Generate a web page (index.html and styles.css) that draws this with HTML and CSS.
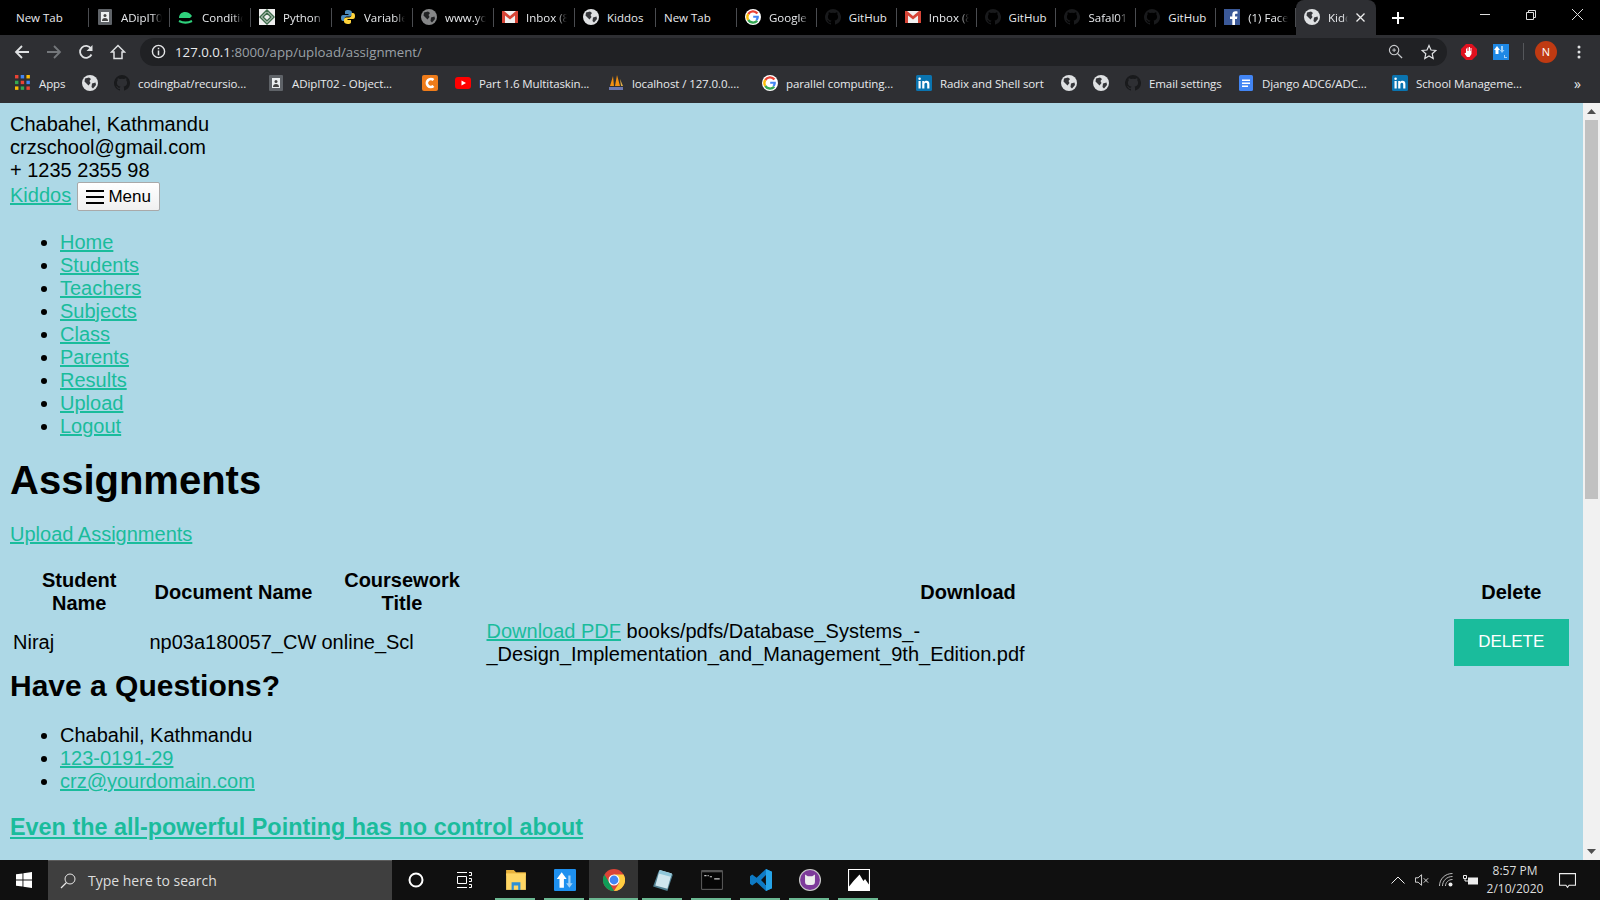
FILE: index.html
```html
<!DOCTYPE html>
<html lang="en">
<head>
<meta charset="utf-8">
<title>Kiddos</title>
<link rel="stylesheet" href="styles.css">
</head>
<body>
<svg class="sprite" aria-hidden="true">
  <symbol id="globe" viewBox="0 0 16 16"><circle cx="8" cy="8" r="8" fill="#dfe1e3"/><path fill="#35363a" d="M3 3.500 7 2.500 9 4 7.500 6 8.500 8 6.500 10.500 5 9 2.500 6.500ZM10 8.500 13.500 7.500 14 10 11 13.500 9.500 12Z"/></symbol>
  <symbol id="gh" viewBox="0 0 16 16"><path fill="#191a1c" d="M8 0a8 8 0 0 0-2.500 15.600c.4.100.5-.2.500-.4v-1.400c-2.200.5-2.700-1-2.700-1-.4-.9-.9-1.200-.9-1.200-.7-.5.100-.5.100-.5.800.100 1.200.8 1.200.8.700 1.200 1.900.9 2.300.7.100-.5.300-.9.500-1.100-1.800-.2-3.600-.9-3.600-4 0-.9.300-1.600.8-2.100-.1-.2-.4-1 .1-2.100 0 0 .7-.2 2.200.8a7.600 7.600 0 0 1 4 0c1.500-1 2.200-.8 2.200-.8.400 1.100.2 1.900.1 2.100.5.600.8 1.300.8 2.100 0 3.100-1.900 3.800-3.600 4 .3.200.5.700.5 1.500v2.200c0 .2.100.5.500.4A8 8 0 0 0 8 0Z"/></symbol>
  <symbol id="gmail" viewBox="0 0 16 16"><path fill="#f1f1f1" d="M0 2h16v12H0z"/><path fill="#d64537" d="M0 2h2l6 5 6-5h2v12h-3V6.500L8 10.500 3 6.500V14H0Z"/></symbol>
  <symbol id="google" viewBox="0 0 16 16"><circle cx="8" cy="8" r="8" fill="#fff"/><path fill="none" stroke="#ea4335" stroke-width="2.400" d="M12.400 4.400A5.600 5.600 0 0 0 3.300 5"/><path fill="none" stroke="#fbbc05" stroke-width="2.400" d="M3.300 5a5.600 5.600 0 0 0 0 6"/><path fill="none" stroke="#34a853" stroke-width="2.400" d="M3.300 11a5.600 5.600 0 0 0 8.900.7"/><path fill="#4285f4" d="M8.200 6.800h5.600c.3 2-.3 3.700-1.600 4.900l-1.700-1.400c.6-.5.900-1 1-1.600H8.200Z"/></symbol>
  <symbol id="doc" viewBox="0 0 16 16"><rect width="14" height="16" x="1" rx="1" fill="#5f6368"/><rect width="8" height="10" x="4" y="3" fill="#eceff1"/><circle cx="8" cy="6.500" r="1.500" fill="#444"/><path fill="#444" d="M5 12c0-2 1-3 3-3s3 1 3 3Z"/></symbol>
  <symbol id="li" viewBox="0 0 16 16"><rect width="16" height="16" rx="1.500" fill="#0a74b0"/><path fill="#fff" d="M2.500 6h2.200v7.500H2.500ZM3.600 2.500a1.300 1.300 0 1 1 0 2.600 1.300 1.300 0 0 1 0-2.600ZM6.200 6h2.100v1c.4-.7 1.200-1.200 2.300-1.200 2.200 0 2.800 1.400 2.800 3.400v4.300h-2.200V9.700c0-1-.2-1.900-1.300-1.900s-1.500.8-1.500 1.900v3.800H6.200Z"/></symbol>
</svg>

<header class="chrome">
  <div class="tabstrip">
    <div class="tab"><span class="tab-text tab-full">New Tab</span></div>
    <div class="tab"><svg class="ico"><use href="#doc"/></svg><span class="tab-text">ADipIT02</span></div>
    <div class="tab"><svg class="ico" viewBox="0 0 16 16"><path fill="#2fd17c" d="M1 9c0-4 3-6 6-6s5 1.500 7 4l-2 2Z"/><path fill="none" stroke="#2fd17c" stroke-width="2" d="M1 12c4 2 9 2 13 0"/></svg><span class="tab-text">Conditional</span></div>
    <div class="tab"><svg class="ico" viewBox="0 0 16 16"><rect width="16" height="16" fill="#eee"/><path fill="none" stroke="#3d6b4a" stroke-width="1.500" d="M8 1 15 8 8 15 1 8Z M8 4 12 8 8 12 4 8Z"/></svg><span class="tab-text">Python</span></div>
    <div class="tab"><svg class="ico" viewBox="0 0 16 16"><path fill="#4b8bbe" d="M8 1C5 1 5 2 5 3.500V5h3.500v1H3C1.500 6 1 7 1 9s.7 3 2 3h1.500v-2c0-1.500 1-2.500 2.500-2.500h3c1 0 2-1 2-2V3.500C12 2 10.500 1 8 1Z"/><path fill="#ffd43b" d="M8 15c3 0 3-1 3-2.500V11H7.500v-1H13c1.500 0 2-1 2-3s-.7-3-2-3h-1.500v2c0 1.500-1 2.500-2.500 2.500H6c-1 0-2 1-2 2v2C4 14 5.500 15 8 15Z"/></svg><span class="tab-text">Variables</span></div>
    <div class="tab"><svg class="ico ico-dim"><use href="#globe"/></svg><span class="tab-text">www.youtube</span></div>
    <div class="tab"><svg class="ico"><use href="#gmail"/></svg><span class="tab-text">Inbox (8)</span></div>
    <div class="tab"><svg class="ico"><use href="#globe"/></svg><span class="tab-text tab-plain">Kiddos</span></div>
    <div class="tab"><span class="tab-text tab-full">New Tab</span></div>
    <div class="tab"><svg class="ico"><use href="#google"/></svg><span class="tab-text">Google</span></div>
    <div class="tab"><svg class="ico"><use href="#gh"/></svg><span class="tab-text tab-plain">GitHub</span></div>
    <div class="tab"><svg class="ico"><use href="#gmail"/></svg><span class="tab-text">Inbox (8)</span></div>
    <div class="tab"><svg class="ico"><use href="#gh"/></svg><span class="tab-text tab-plain">GitHub</span></div>
    <div class="tab"><svg class="ico"><use href="#gh"/></svg><span class="tab-text">Safal01</span></div>
    <div class="tab"><svg class="ico"><use href="#gh"/></svg><span class="tab-text tab-plain">GitHub</span></div>
    <div class="tab"><svg class="ico" viewBox="0 0 16 16"><rect width="16" height="16" fill="#3b5998"/><path fill="#fff" d="M11 16V10h2l.4-2.500H11V6c0-.8.300-1.200 1.200-1.200h1.300V2.500C13 2.400 12.200 2.300 11.500 2.300 9.500 2.300 8.300 3.500 8.300 5.600v1.900H6V10h2.300v6Z"/></svg><span class="tab-text">(1) Facebook</span></div>
    <div class="tab tab-active"><svg class="ico"><use href="#globe"/></svg><span class="tab-text tab-short">Kiddos</span><svg class="tab-close" viewBox="0 0 9 9"><path stroke="#eee" stroke-width="1.300" d="M.5.5l8 8M8.500.5l-8 8"/></svg></div>
    <svg class="newtab" viewBox="0 0 12 12"><path stroke="#fff" stroke-width="2" d="M6 0v12M0 6h12"/></svg>
    <div class="winctl">
      <svg class="winbtn" viewBox="0 0 46 30"><path stroke="#ddd" d="M18 14.500h10"/></svg>
      <svg class="winbtn" viewBox="0 0 46 30"><path fill="none" stroke="#ddd" d="M18.500 12.500h7v7h-7zM20.500 12.500v-2h7v7h-2"/></svg>
      <svg class="winbtn" viewBox="0 0 46 30"><path stroke="#ddd" d="M18 9l11 11M29 9 18 20"/></svg>
    </div>
  </div>

  <div class="toolbar">
    <div class="nav">
      <svg class="navico" viewBox="0 0 16 16"><path fill="none" stroke="#dfe1e3" stroke-width="1.800" d="M15 8H2M8 2 2 8l6 6"/></svg>
      <svg class="navico" viewBox="0 0 16 16"><path fill="none" stroke="#74777b" stroke-width="1.800" d="M1 8h13M8 2l6 6-6 6"/></svg>
      <svg class="navico" viewBox="0 0 16 16"><path fill="none" stroke="#dfe1e3" stroke-width="1.800" d="M13.500 10.500A6 6 0 1 1 13 4.500"/><path fill="#dfe1e3" d="M14.500 1v6h-6Z"/></svg>
      <svg class="navico" viewBox="0 0 16 16"><path fill="none" stroke="#dfe1e3" stroke-width="1.500" d="M8 1.500 1.500 8H4v6.500h8V8h2.500Z"/></svg>
    </div>
    <div class="omnibox">
      <svg class="omni-info" viewBox="0 0 16 16"><circle cx="8" cy="8" r="6.500" fill="none" stroke="#e4e5e7" stroke-width="1.500"/><path fill="#e4e5e7" d="M7.200 7h1.600v5H7.200ZM7.200 4h1.600v1.600H7.200Z"/></svg>
      <span class="url"><span class="url-host">127.0.0.1</span>:8000/app/upload/assignment/</span>
      <svg class="omni-zoom" viewBox="0 0 16 16"><circle cx="6.500" cy="6.500" r="5" fill="none" stroke="#c9cbce" stroke-width="1.200"/><path stroke="#c9cbce" stroke-width="1.400" d="M10 10l5 5"/><path stroke="#c9cbce" d="M4.500 6.500h4M6.500 4.500v4"/></svg>
      <svg class="omni-star" viewBox="0 0 16 16"><path fill="none" stroke="#dfe1e3" stroke-width="1.200" d="M8 1.500 10 6l4.800.5-3.600 3.200 1 4.800L8 12l-4.200 2.500 1-4.800L1.200 6.500 6 6Z"/></svg>
    </div>
    <div class="ext">
      <svg class="ext-ico" viewBox="0 0 16 16"><path fill="#e0101e" d="M5 0h6l5 5v6l-5 5H5l-5-5V5Z"/><path fill="#fff" d="M5 7V4.500h1V7h.5V3.500h1V7H8V3h1v4h.5V4h1v6l-2 3H6L3.500 9.500l1-.8L5 9Z"/></svg>
      <svg class="ext-ico ext-blue" viewBox="0 0 16 16"><rect width="16" height="16" fill="#1e88e5"/><path fill="#fff" d="M4 2 7 6H5.500v4h-3V6H1Z"/><path fill="#9fd0f7" d="M8 2h2v4h1.500L9 9 6.800 6H8ZM11 11h1v2h2v1h-3Z"/></svg>
      <span class="ext-sep"></span>
      <span class="avatar">N</span>
      <svg class="kebab" viewBox="0 0 4 14"><circle cx="2" cy="2" r="1.500" fill="#dfe1e3"/><circle cx="2" cy="7" r="1.500" fill="#dfe1e3"/><circle cx="2" cy="12" r="1.500" fill="#dfe1e3"/></svg>
    </div>
  </div>

  <div class="bookmarks">
    <div class="bm"><svg class="ico" viewBox="0 0 14 14"><g fill="#ea4335"><rect width="3" height="3"/><rect x="5" width="3" height="3" fill="#4285f4"/><rect x="10" width="3" height="3" fill="#fbbc05"/><rect y="5" width="3" height="3" fill="#34a853"/><rect x="5" y="5" width="3" height="3"/><rect x="10" y="5" width="3" height="3" fill="#4285f4"/><rect y="10" width="3" height="3" fill="#fbbc05"/><rect x="5" y="10" width="3" height="3" fill="#34a853"/><rect x="10" y="10" width="3" height="3"/></g></svg><span>Apps</span></div>
    <div class="bm"><svg class="ico"><use href="#globe"/></svg></div>
    <div class="bm"><svg class="ico"><use href="#gh"/></svg><span>codingbat/recursio...</span></div>
    <div class="bm"><svg class="ico"><use href="#doc"/></svg><span>ADipIT02 - Object...</span></div>
    <div class="bm"><svg class="ico" viewBox="0 0 16 16"><rect width="16" height="16" rx="2" fill="#ef7c1a"/><path fill="none" stroke="#fff" stroke-width="2.600" d="M11.500 5a4 4 0 1 0 0 6"/></svg></div>
    <div class="bm"><svg class="ico" viewBox="0 0 16 16"><rect y="2" width="16" height="12" rx="3" fill="#f00"/><path fill="#fff" d="M6.500 5.500 11 8l-4.500 2.500Z"/></svg><span>Part 1.6 Multitaskin...</span></div>
    <div class="bm"><svg class="ico" viewBox="0 0 16 16"><path fill="#f29111" d="M5 1 2 11h4ZM9 0 7 11h5Z"/><path fill="#e2b04a" d="M12 4 15 11h-2Z"/><path fill="#6c78af" d="M1 12h14v3H1Z"/></svg><span>localhost / 127.0.0....</span></div>
    <div class="bm"><svg class="ico"><use href="#google"/></svg><span>parallel computing...</span></div>
    <div class="bm"><svg class="ico"><use href="#li"/></svg><span>Radix and Shell sort</span></div>
    <div class="bm"><svg class="ico"><use href="#globe"/></svg></div>
    <div class="bm"><svg class="ico"><use href="#globe"/></svg></div>
    <div class="bm"><svg class="ico"><use href="#gh"/></svg><span>Email settings</span></div>
    <div class="bm"><svg class="ico" viewBox="0 0 16 16"><rect x="1" width="14" height="16" rx="1.500" fill="#4285f4"/><path fill="#fff" d="M4 4.500h8V6H4ZM4 7.500h8V9H4ZM4 10.500h6V12H4Z"/></svg><span>Django ADC6/ADC...</span></div>
    <div class="bm"><svg class="ico"><use href="#li"/></svg><span>School Manageme...</span></div>
    <div class="bm bm-more">»</div>
  </div>
</header>

<div class="viewport">
  <main class="page">
    <div class="contact">
      <div>Chabahel, Kathmandu</div>
      <div>crzschool@gmail.com</div>
      <div>+ 1235 2355 98</div>
    </div>
    <nav class="brandbar">
      <a class="brand" href="#">Kiddos</a>
      <button class="menu-btn" type="button"><svg class="burger" viewBox="0 0 18 14"><path stroke="#000" stroke-width="2" d="M0 1h18M0 7h18M0 13h18"/></svg>Menu</button>
    </nav>
    <ul class="navlist">
      <li><a href="#">Home</a></li>
      <li><a href="#">Students</a></li>
      <li><a href="#">Teachers</a></li>
      <li><a href="#">Subjects</a></li>
      <li><a href="#">Class</a></li>
      <li><a href="#">Parents</a></li>
      <li><a href="#">Results</a></li>
      <li><a href="#">Upload</a></li>
      <li><a href="#">Logout</a></li>
    </ul>
    <h1>Assignments</h1>
    <a href="#">Upload Assignments</a>
    <table class="grid">
      <colgroup>
        <col class="col-student"><col class="col-doc"><col class="col-title"><col class="col-dl"><col class="col-del">
      </colgroup>
      <thead>
        <tr><th>Student Name</th><th>Document Name</th><th>Coursework Title</th><th>Download</th><th>Delete</th></tr>
      </thead>
      <tbody>
        <tr>
          <td>Niraj</td>
          <td>np03a180057_CW</td>
          <td>online_Scl</td>
          <td><a href="#">Download PDF</a> books/pdfs/Database_Systems_-_Design_Implementation_and_Management_9th_Edition.pdf</td>
          <td><a class="del-btn" href="#">DELETE</a></td>
        </tr>
      </tbody>
    </table>
    <h2>Have a Questions?</h2>
    <ul class="info">
      <li>Chabahil, Kathmandu</li>
      <li><a href="#">123-0191-29</a></li>
      <li><a href="#">crz@yourdomain.com</a></li>
    </ul>
    <h3><a href="#">Even the all-powerful Pointing has no control about</a></h3>
  </main>
  <div class="scrollbar">
    <div class="sb-btn"><svg class="sb-arrow" viewBox="0 0 9 5"><path fill="#505050" d="M4.500 0 9 5H0Z"/></svg></div>
    <div class="sb-track"><div class="sb-thumb"></div></div>
    <div class="sb-btn"><svg class="sb-arrow" viewBox="0 0 9 5"><path fill="#505050" d="M0 0h9L4.500 5Z"/></svg></div>
  </div>
</div>

<footer class="taskbar">
  <div class="tb-btn"><svg class="tb-ico" viewBox="0 0 16 16"><path fill="#fff" d="M0 2.300 6.500 1.400V7.500H0ZM7.400 1.300 16 0V7.500H7.400ZM0 8.500H6.500V14.600L0 13.700ZM7.400 8.500H16V16L7.400 14.700Z"/></svg></div>
  <div class="search"><svg class="search-ico" viewBox="0 0 16 16"><circle cx="10" cy="6" r="5" fill="none" stroke="#e8e8e8"/><path stroke="#e8e8e8" stroke-width="1.200" d="M6.500 9.500 1 15"/></svg><span>Type here to search</span></div>
  <div class="tb-btn"><svg class="tb-ico" viewBox="0 0 16 16"><circle cx="8" cy="8" r="6.500" fill="none" stroke="#fff" stroke-width="2"/></svg></div>
  <div class="tb-btn tb-view"><svg class="tb-ico" viewBox="0 0 16 16"><path fill="none" stroke="#fff" d="M1.500 4.500h9v7h-9zM1 .5h10M1 15.500h10M13 .5h2.500v3H13M13 6.500h2.500v3H13M13 12.500h2.500v3H13"/></svg></div>
  <div class="tb-app tb-open"><svg class="tb-ico tb-big" viewBox="0 0 20 20"><path fill="#e8b23c" d="M1 1h7l2 2h9v3H1Z"/><path fill="#ffd664" d="M1 4h18v15H1Z"/><path fill="#2d8fd5" d="M6 12h8v7h-2v-4H8v4H6Z"/></svg></div>
  <div class="tb-app tb-open"><svg class="tb-ico tb-big" viewBox="0 0 20 20"><rect width="20" height="20" rx="1" fill="#1e90ef"/><path fill="#fff" d="M7 3 11.500 9H9v8H5V9H2.500Z"/><path fill="#9fd0f7" d="M13 6h2v7h2l-3 4-3-4h2Z"/></svg></div>
  <div class="tb-app tb-open tb-active"><svg class="tb-ico tb-big" viewBox="0 0 20 20"><circle cx="10" cy="10" r="10" fill="#db4437"/><path fill="#0f9d58" d="M10 20A10 10 0 0 1 1.300 5L6 13l4 7Z"/><path fill="#ffcd40" d="M10 5h8.700A10 10 0 0 1 10 20l4.500-7Z"/><circle cx="10" cy="10" r="4.500" fill="#4285f4" stroke="#fff"/></svg></div>
  <div class="tb-app tb-open"><svg class="tb-ico tb-big" viewBox="0 0 20 20"><path fill="#4f7e8f" d="M6 2 19 5 14 20 1 16Z"/><path fill="#cfe6ee" d="M7 1 18 4 14 18 3 15Z"/><path fill="#8fc6d9" d="M7 1 18 4 17 7 6 4Z"/></svg></div>
  <div class="tb-app tb-open"><svg class="tb-ico tb-big" viewBox="0 0 20 20"><rect y="1" width="20" height="18" rx="1" fill="#555"/><rect x="1" y="3" width="18" height="15" fill="#060606"/><path stroke="#ccc" d="M3 6h2M6 6h1M8 7h2M12 9h5"/></svg></div>
  <div class="tb-app tb-open"><svg class="tb-ico tb-big" viewBox="0 0 20 20"><path fill="#0e7ac4" d="M14.500 0 20 2.500v15L14.500 20 6 12l-4 3-2-1.500v-7L2 5l4 3ZM14.500 5.500 10 10l4.500 4.500Z"/><path fill="#26a4e8" d="M14.500 0 20 2.500v15L14.500 20Z"/></svg></div>
  <div class="tb-app tb-open"><svg class="tb-ico tb-big" viewBox="0 0 20 20"><circle cx="10" cy="10" r="10" fill="#ccc"/><circle cx="10" cy="10" r="9" fill="#7d3a9a"/><path fill="#eee" d="M5.500 5 8 6.500h4L14.500 5v6.500a3 3 0 0 1-3 3h-3a3 3 0 0 1-3-3Z"/></svg></div>
  <div class="tb-app tb-open"><svg class="tb-ico tb-big" viewBox="0 0 20 20"><rect width="20" height="20" fill="#fff"/><path fill="#0a0a0a" d="M1 1h18v13l-3.500-5-1.500 2-3.500-6L5 11 1 16Z"/></svg></div>
  <div class="tray">
    <svg class="tray-ico" viewBox="0 0 14 8"><path fill="none" stroke="#eee" d="M.5 7.500 7 1l6.500 6.500"/></svg>
    <svg class="tray-ico" viewBox="0 0 16 14"><path fill="none" stroke="#eee" d="M.5 4.500h3l4-3.500v12l-4-3.500h-3Z"/><path stroke="#eee" d="M10 5l5 5M15 5l-5 5"/></svg>
    <svg class="tray-ico" viewBox="0 0 14 14"><path fill="none" stroke="#bbb" d="M.5 13C.5 6 6 .5 13.500.5M3.500 13C3.500 8 7.500 3.500 13.500 3.500M6.500 13C6.500 9.500 9.500 6.500 13.500 6.500"/><circle cx="11.500" cy="11.500" r="2" fill="#eee"/></svg>
    <svg class="tray-batt" viewBox="0 0 16 10"><path fill="#eee" d="M5 2.500h10v7H5Z"/><path fill="none" stroke="#eee" d="M.5.500h3v3h-3ZM2 3.500v2.500h3"/></svg>
    <div class="clock"><div>8:57 PM</div><div>2/10/2020</div></div>
    <svg class="notif" viewBox="0 0 16 16"><path fill="none" stroke="#eee" d="M.5 1.500h15v11H9.500L8 14.500 6.500 12.500H.5Z"/></svg>
  </div>
</footer>
</body>
</html>
```
FILE: styles.css
```css
* { box-sizing: border-box; }
html, body { height: 100%; }
body {
  margin: 0;
  height: 900px;
  display: flex;
  flex-direction: column;
  overflow: hidden;
  background: #000;
  font-family: "Liberation Sans", Arial, sans-serif;
}
.sprite { display: none; }
.ico { width: 16px; height: 16px; flex: none; display: block; }
.ico-dim { opacity: .6; }

/* browser chrome */
.chrome { flex: none; height: 103px; display: flex; flex-direction: column; font-family: "Open Sans", sans-serif; font-size: 11.5px; color: #e8eaed; }
.tabstrip { height: 35px; background: #000; display: flex; align-items: center; padding-left: 8px; }
.tab { width: 79.86px; height: 35px; padding: 0 8px 1px; display: flex; align-items: center; gap: 8px; position: relative; overflow: hidden; flex: none; }
.tab:nth-child(-n+9) { width: 81px; }
.tab::after { content: ""; position: absolute; right: 0; top: 8px; height: 19px; width: 1px; background: #4a4c50; }
.tab-text { flex: 1; min-width: 0; white-space: nowrap; overflow: hidden; -webkit-mask-image: linear-gradient(to right, #000 75%, transparent); mask-image: linear-gradient(to right, #000 75%, transparent); }
.tab-plain, .tab-full { -webkit-mask-image: none; mask-image: none; }
.tab-active { background: #2e2f33; border-radius: 8px 8px 0 0; width: 80px; }
.tab-active::after { display: none; }
.tab-short { flex: 0 0 20px; }
.tab-close { width: 9px; height: 9px; margin-left: auto; margin-right: 7px; flex: none; }
.newtab { width: 12px; height: 12px; margin-left: 16px; flex: none; }
.winctl { margin-left: auto; display: flex; height: 30px; align-self: flex-start; }
.winbtn { width: 46px; height: 30px; display: block; }

.toolbar { height: 33px; background: #2e2f33; display: flex; align-items: center; padding-left: 14px; }
.nav { display: flex; gap: 16px; width: 126px; flex: none; }
.navico { width: 16px; height: 16px; display: block; }
.omnibox { width: 1307px; height: 28px; border-radius: 14px; background: #202124; display: flex; align-items: center; padding: 0 10px 0 11px; flex: none; }
.omni-info { width: 15px; height: 15px; flex: none; }
.url { margin-left: 9px; font-size: 13.25px; color: #9aa0a6; flex: 1; }
.url-host { color: #e8eaed; }
.omni-zoom { width: 15px; height: 15px; margin-right: 18px; flex: none; }
.omni-star { width: 16px; height: 16px; flex: none; }
.ext { flex: 1; display: flex; align-items: center; padding-left: 14px; }
.ext-ico { width: 16px; height: 16px; flex: none; }
.ext-blue { margin-left: 16px; }
.ext-sep { width: 1px; height: 17px; background: #55575b; margin-left: 14px; }
.avatar { width: 22px; height: 22px; border-radius: 50%; background: #bf3a12; color: #fff; font-size: 11px; display: flex; align-items: center; justify-content: center; margin-left: 11px; flex: none; }
.kebab { width: 4px; height: 14px; margin-left: 20px; flex: none; }

.bookmarks { height: 35px; background: #2e2f33; display: grid; align-items: center; padding-left: 14px; padding-bottom: 5px; letter-spacing: -.1px;
  grid-template-columns: 67px 32px 154px 154px 33px 153px 154px 154px 145px 32px 32px 113px 154px 182px 17px; }
.bm { display: flex; align-items: center; gap: 8px; white-space: nowrap; padding-left: 1px; }
.bm-more { font-size: 14px; }

/* page */
.viewport { flex: 1; min-height: 0; display: flex; background: #add8e6; }
.page { flex: 1; min-width: 0; overflow: hidden; padding: 10px 10px 0; font-size: 20px; line-height: 23px; color: #000; }
.page a { color: #1abc9c; }
.brandbar { display: flex; align-items: flex-start; gap: 6px; height: 30px; }
.brand { margin-top: 2px; }
.menu-btn { width: 83px; height: 29px; padding: 0; display: flex; align-items: center; justify-content: center; gap: 4px; font: 17px "Liberation Sans", Arial, sans-serif; color: #000; background: linear-gradient(#fff, #f0f0f0); border: 1px solid #a9a9a9; border-radius: 2px; }
.burger { width: 18px; height: 14px; }
.navlist { margin: 19px 0 0; padding-left: 50px; }
h1 { font-size: 40px; line-height: 46px; margin: 19px 0 20px; }
.grid { width: calc(100% - 1px); table-layout: fixed; margin-top: 20px; border-collapse: separate; border-spacing: 2px; }
.col-student { width: 134.5px; }
.col-doc { width: 170px; }
.col-title { width: 163px; }
.col-del { width: 117.5px; }
th, td { padding: 1px; }
td { vertical-align: middle; }
.del-btn { display: block; height: 47px; line-height: 45px; text-align: center; font-size: 17px; background: #1abc9c; color: #fff !important; text-decoration: none; }
h2 { font-size: 30px; line-height: 34px; margin: 0 0 21px; }
.info { margin: 0; padding-left: 50px; }
h3 { font-size: 23.4px; line-height: 27px; margin: 21px 0 0; }

.scrollbar { flex: none; width: 17px; background: #f1f1f1; display: flex; flex-direction: column; }
.sb-btn { flex: none; height: 17px; display: flex; align-items: center; justify-content: center; }
.sb-arrow { width: 9px; height: 5px; display: block; }
.sb-track { flex: 1; padding: 0 2px; }
.sb-thumb { height: 379px; background: #c1c1c1; }

/* taskbar */
.taskbar { flex: none; height: 40px; background: #101010; display: flex; align-items: stretch; font-family: "Open Sans", sans-serif; color: #eee; }
.tb-btn { width: 48px; display: flex; align-items: center; justify-content: center; flex: none; }
.tb-ico { width: 16px; height: 16px; display: block; }
.tb-big { width: 22px; height: 22px; }
.tb-view { margin-right: 3px; }
.search { width: 344px; background: #3f3f3f; border-top: 1px solid #5c5c5c; display: flex; align-items: center; padding-left: 12px; gap: 12px; font-size: 14px; color: #ddd; flex: none; }
.search-ico { width: 16px; height: 16px; }
.tb-app { width: 49px; display: flex; align-items: center; justify-content: center; flex: none; position: relative; }
.tb-open::after { content: ""; position: absolute; left: 4px; right: 5px; bottom: 0; height: 2px; background: #6bb892; }
.tb-active { background: #333; }
.tb-active::after { left: 0; right: 0; }
.tray { margin-left: auto; display: flex; align-items: center; }
.tray-ico { width: 14px; height: 14px; margin-right: 10px; flex: none; }
.tray-batt { width: 16px; height: 10px; flex: none; }
.clock { width: 70px; margin-left: 1px; font-size: 12px; line-height: 18px; text-align: center; color: #ddd; }
.notif { width: 17px; height: 17px; margin: 0 24px 0 9px; flex: none; }
```
